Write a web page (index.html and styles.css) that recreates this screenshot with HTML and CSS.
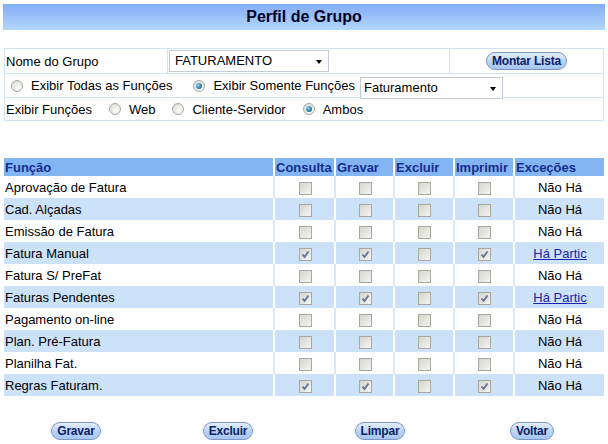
FILE: index.html
```html
<!DOCTYPE html>
<html lang="pt-BR">
<head>
  <meta charset="UTF-8">
  <title>Perfil de Grupo</title>
  <link rel="stylesheet" href="styles.css">
</head>
<body>
  <h1 class="titulo">Perfil de Grupo</h1>

  <table class="filtro">
    <tr class="linha1">
      <td class="rotulo">Nome do Grupo</td>
      <td class="campo"><div class="select grupo">FATURAMENTO</div></td>
      <td class="acao"><span class="btn">Montar Lista</span></td>
    </tr>
    <tr class="linha2">
      <td colspan="3">
        <div class="opcoes">
          <span class="radio primeiro"></span><span>Exibir Todas as Funções</span>
          <span class="radio marcado"></span><span>Exibir Somente Funções</span>
          <div class="select modulo">Faturamento</div>
        </div>
      </td>
    </tr>
    <tr class="linha3">
      <td colspan="3">
        <div class="opcoes">
          <span>Exibir Funções</span>
          <span class="radio"></span><span>Web</span>
          <span class="radio"></span><span>Cliente-Servidor</span>
          <span class="radio marcado"></span><span>Ambos</span>
        </div>
      </td>
    </tr>
  </table>

  <table class="funcoes">
    <colgroup>
      <col style="width:270px">
      <col style="width:61px">
      <col style="width:59px">
      <col style="width:60px">
      <col style="width:60px">
      <col style="width:90px">
    </colgroup>
    <thead>
      <tr>
        <th>Função</th>
        <th>Consulta</th>
        <th>Gravar</th>
        <th>Excluir</th>
        <th>Imprimir</th>
        <th>Exceções</th>
      </tr>
    </thead>
    <tbody id="linhas"></tbody>
  </table>

  <div class="botoes">
    <span class="btn">Gravar</span>
    <span class="btn">Excluir</span>
    <span class="btn">Limpar</span>
    <span class="btn">Voltar</span>
  </div>

<script>
const funcoes = [
  ["Aprovação de Fatura", 0, 0, 0, 0, false],
  ["Cad. Alçadas", 0, 0, 0, 0, false],
  ["Emissão de Fatura", 0, 0, 0, 0, false],
  ["Fatura Manual", 1, 1, 0, 1, true],
  ["Fatura S/ PreFat", 0, 0, 0, 0, false],
  ["Faturas Pendentes", 1, 1, 0, 1, true],
  ["Pagamento on-line", 0, 0, 0, 0, false],
  ["Plan. Pré-Fatura", 0, 0, 0, 0, false],
  ["Planilha Fat.", 0, 0, 0, 0, false],
  ["Regras Faturam.", 1, 1, 0, 1, false]
];

const check = '<svg width="11" height="11" viewBox="0 0 11 11"><polyline points="2.5,5.5 4.5,8 8.5,2.5" fill="none" stroke="#66739a" stroke-width="1.9"/></svg>';

const corpo = document.getElementById("linhas");
funcoes.forEach((f, i) => {
  let html = `<td class="nome">${f[0]}</td>`;
  for (let c = 1; c <= 4; c++) {
    html += `<td class="chk"><span class="caixa">${f[c] ? check : ""}</span></td>`;
  }
  html += f[5]
    ? `<td class="exc"><a href="#">Há Partic</a></td>`
    : `<td class="exc">Não Há</td>`;
  const tr = document.createElement("tr");
  if (i % 2 === 1) tr.className = "azul";
  tr.innerHTML = html;
  corpo.appendChild(tr);
});
</script>
</body>
</html>
```

FILE: styles.css
```css
body {
  margin: 0;
  padding: 4px 4px 0 4px;
  font-family: "Liberation Sans", Arial, sans-serif;
  font-size: 13px;
  color: #000;
  background: #fff;
}

.titulo {
  margin: 0 -1px;
  height: 26px;
  line-height: 26px;
  text-align: center;
  font-size: 16px;
  font-weight: bold;
  color: #000022;
  background: linear-gradient(#83acf6, #b4d7fb);
}

/* filtro */

.filtro {
  margin-top: 18px;
  width: 600px;
  border-collapse: collapse;
  border: 1px solid #d3e2f2;
}

.filtro td {
  border: 1px solid #d3e2f2;
  padding: 0;
}

.linha1 td {
  height: 24px;
}

.linha2 td {
  height: 23px;
}

.linha3 td {
  height: 22px;
}

.rotulo {
  width: 161px;
  padding-left: 1px !important;
}

.campo {
  width: 281px;
}

.acao {
  text-align: center;
}

.opcoes {
  display: flex;
  align-items: center;
  padding-left: 1px;
}

.radio {
  width: 10px;
  height: 10px;
  border: 1px solid #a9aba6;
  border-radius: 50%;
  background: radial-gradient(circle at 65% 65%, #fdfdfc 0%, #e6e6e2 60%, #cfcfca 100%);
  margin: 0 8px 0 17px;
  position: relative;
}

.linha2 .radio {
  margin-left: 21px;
}

.linha2 .radio.primeiro {
  margin-left: 5px;
}

.radio.marcado::after {
  content: "";
  position: absolute;
  left: 2px;
  top: 2px;
  width: 6px;
  height: 6px;
  border-radius: 50%;
  background: radial-gradient(circle at 35% 35%, #8fd0ea, #1f6f9a 70%, #134e70);
}

.select {
  position: relative;
  height: 20px;
  line-height: 20px;
  border: 1px solid #c3ccd6;
  background: #fff;
  padding-left: 5px;
}

.select::after {
  content: "";
  position: absolute;
  right: 6px;
  top: 9px;
  border-left: 3px solid transparent;
  border-right: 3px solid transparent;
  border-top: 4px solid #000;
}

.select.grupo {
  width: 153px;
  margin-left: 1px;
}

.select.modulo {
  width: 138px;
  margin: 2px 0 -2px 5px;
  padding-left: 3px;
}

.btn {
  display: inline-block;
  height: 16px;
  line-height: 16px;
  padding: 0 5px;
  border: 1px solid #7d97c4;
  border-radius: 9px;
  background: linear-gradient(#e4eefc, #b9d3f4 55%, #a6c6f1);
  color: #0d1e66;
  font-size: 12px;
  font-weight: bold;
  letter-spacing: -0.2px;
}

/* funcoes */

.funcoes {
  margin-top: 37px;
  width: 600px;
  table-layout: fixed;
  border-collapse: collapse;
}

.funcoes th {
  height: 18px;
  padding: 0 0 0 1px;
  text-align: left;
  background: #84b5f3;
  color: #152c8c;
  font-size: 13px;
  white-space: nowrap;
  overflow: hidden;
}

.funcoes th + th {
  border-left: 2px solid #fff;
}

.funcoes td {
  height: 22px;
  padding: 0 0 0 1px;
  background: #fff;
}

.funcoes td + td {
  border-left: 2px solid #dbe7f4;
}

.funcoes tr.azul td {
  background: #cce2f9;
}

.funcoes tr.azul td + td {
  border-left-color: #fff;
}

.chk {
  text-align: center;
}

.caixa {
  display: inline-block;
  width: 11px;
  height: 11px;
  border: 1px solid #a8a8a0;
  background: linear-gradient(135deg, #d6d6d0, #f4f4f1);
  vertical-align: middle;
}

.caixa svg {
  display: block;
}

.exc {
  text-align: center;
}

.exc a {
  color: #1b22a8;
}

.botoes {
  display: grid;
  grid-template-columns: repeat(4, 1fr);
  justify-items: center;
  margin: 26px -4px 0;
}
```
